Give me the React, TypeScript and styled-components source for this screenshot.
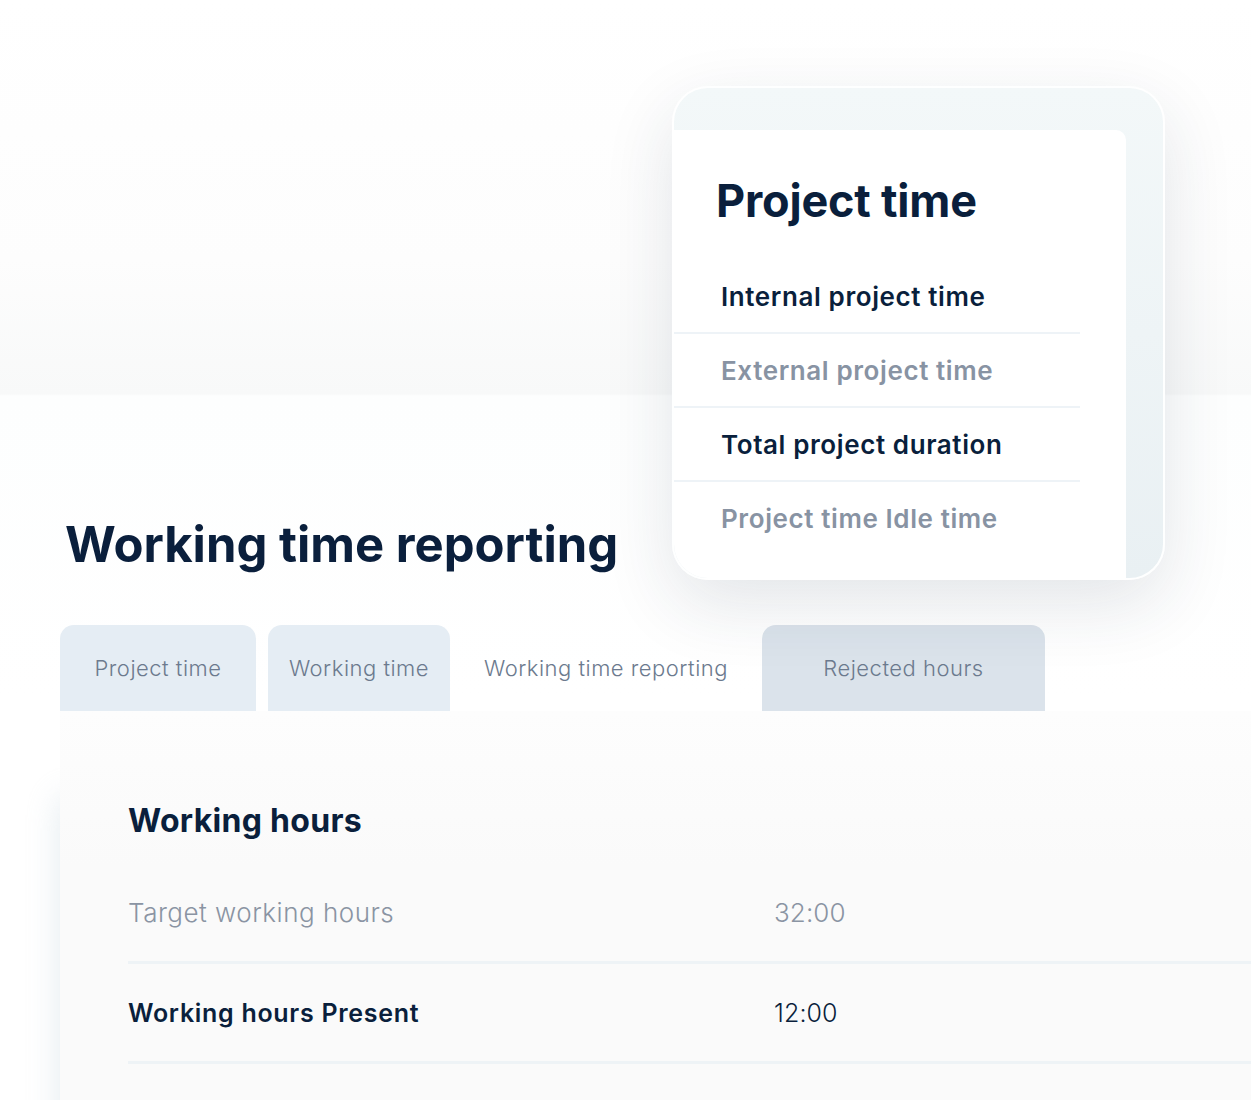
import React from 'react'
import styled, { createGlobalStyle } from 'styled-components'

const GlobalStyle = createGlobalStyle`
    html, body {
        margin: 0;
        padding: 0;
        background: #ffffff;
    }
    body {
        font-family: Inter, "Noto Sans", "Liberation Sans", sans-serif;
        color: #0a1f3c;
    }
`

type TabVariant = 'idle' | 'active' | 'dim'

const Page = styled.div`
    position: relative;
    width: 1251px;
    height: 1100px;
    overflow: hidden;
    background: linear-gradient(
        180deg,
        #ffffff 0px,
        #fdfdfd 260px,
        #f8f9f9 394px,
        #fdfefe 396px,
        #ffffff 700px
    );
    display: flex;
    flex-direction: column;
    padding-top: 516px;
    box-sizing: border-box;
`

const Heading = styled.h1`
    margin: 0 0 0 65px;
    font-size: 49px;
    line-height: 58px;
    font-weight: 700;
    letter-spacing: 0;
    color: #0a1f3c;
`

const Tabs = styled.div`
    display: flex;
    align-items: stretch;
    gap: 12px;
    margin: 51px 0 0 60px;
    height: 86px;
`

const Tab = styled.div<{ $variant: TabVariant; $width: number }>`
    display: flex;
    align-items: center;
    justify-content: center;
    width: ${({ $width }) => $width}px;
    border-radius: 14px 14px 0 0;
    font-size: 22px;
    font-weight: 300;
    letter-spacing: 0.5px;
    color: #6c7a8e;
    background: ${({ $variant }) =>
        $variant === 'idle' ? '#e5edf4' : $variant === 'dim' ? '#dbe3eb' : 'transparent'};
`

const Panel = styled.div`
    flex: 1;
    margin-left: 60px;
    background: linear-gradient(180deg, #fdfdfd 0%, #fafafa 40%);
    box-shadow: -18px 70px 30px -16px rgba(200, 214, 224, 0.45);
    padding: 86px 0 0 68px;
`

const PanelTitle = styled.h2`
    margin: 0 0 19px;
    font-size: 32px;
    line-height: 48px;
    font-weight: 700;
    letter-spacing: 0.3px;
    color: #0a1f3c;
`

const Row = styled.div<{ $strong?: boolean }>`
    display: grid;
    grid-template-columns: 646px 1fr;
    align-items: center;
    height: 97px;
    border-bottom: 3px solid #eef3f6;
    font-size: ${({ $strong }) => ($strong ? '25px' : '26px')};
    font-weight: ${({ $strong }) => ($strong ? 600 : 300)};
    letter-spacing: ${({ $strong }) => ($strong ? '0.7px' : '0.5px')};
    color: ${({ $strong }) => ($strong ? '#0a1f3c' : '#8a94a3')};
`

const Value = styled.span<{ $strong?: boolean }>`
    font-weight: 300;
    letter-spacing: 0.1px;
    color: ${({ $strong }) => ($strong ? '#0a1f3c' : '#8a94a3')};
`

const Card = styled.div`
    position: absolute;
    left: 672px;
    top: 86px;
    width: 493px;
    height: 494px;
    box-sizing: border-box;
    border-radius: 36px;
    border: 2px solid rgba(255, 255, 255, 0.95);
    background: linear-gradient(180deg, #f3f8f9 0%, #e9f0f3 100%);
    box-shadow: 0 24px 70px rgba(30, 50, 70, 0.12);
    overflow: hidden;
    display: flex;
    padding: 42px 37px 0 0;
`

const CardInner = styled.div`
    flex: 1;
    background: #ffffff;
    border-radius: 0 10px 0 0;
    padding-top: 44px;
`

const CardTitle = styled.h3`
    margin: 0 0 32px 42px;
    font-size: 45px;
    line-height: 54px;
    font-weight: 700;
    letter-spacing: -0.2px;
    color: #0a1f3c;
`

const CardItem = styled.div<{ $muted?: boolean }>`
    display: flex;
    align-items: center;
    height: 72px;
    margin-right: 46px;
    padding-left: 47px;
    border-bottom: 2px solid #eef3f7;
    font-size: 26px;
    font-weight: 600;
    letter-spacing: 0.6px;
    color: ${({ $muted }) => ($muted ? '#8893a3' : '#0a1f3c')};

    &:last-child {
        border-bottom: none;
    }
`

const tabs: { label: string; width: number; variant: TabVariant }[] = [
    { label: 'Project time', width: 196, variant: 'idle' },
    { label: 'Working time', width: 182, variant: 'idle' },
    { label: 'Working time reporting', width: 288, variant: 'active' },
    { label: 'Rejected hours', width: 283, variant: 'dim' },
]

const cardItems = [
    { label: 'Internal project time', muted: false },
    { label: 'External project time', muted: true },
    { label: 'Total project duration', muted: false },
    { label: 'Project time Idle time', muted: true },
]

const App: React.FC = () => {
    return (
        <Page>
            <GlobalStyle />
            <Heading>Working time reporting</Heading>

            <Tabs>
                {tabs.map((t) => (
                    <Tab key={t.label} $variant={t.variant} $width={t.width}>
                        {t.label}
                    </Tab>
                ))}
            </Tabs>

            <Panel>
                <PanelTitle>Working hours</PanelTitle>
                <Row>
                    <span>Target working hours</span>
                    <Value>32:00</Value>
                </Row>
                <Row $strong>
                    <span>Working hours Present</span>
                    <Value $strong>12:00</Value>
                </Row>
            </Panel>

            <Card>
                <CardInner>
                    <CardTitle>Project time</CardTitle>
                    {cardItems.map((item) => (
                        <CardItem key={item.label} $muted={item.muted}>
                            {item.label}
                        </CardItem>
                    ))}
                </CardInner>
            </Card>
        </Page>
    )
}

export default App
